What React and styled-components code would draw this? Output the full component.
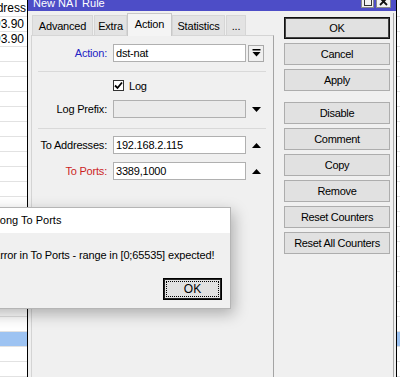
import React from "react";
import styled, { createGlobalStyle } from "styled-components";

const Global = createGlobalStyle`
  html, body { margin: 0; padding: 0; background: #fff; }
  body {
    font-family: "Liberation Sans", Arial, sans-serif;
    font-size: 11px;
    color: #000;
    overflow: hidden;
  }
  * { box-sizing: border-box; }
`;

const Screen = styled.div`
  position: relative;
  width: 400px;
  height: 377px;
  overflow: hidden;
  background: #fff;
`;

/* ---------- background list ---------- */
const List = styled.div`
  display: flex;
  flex-direction: column;
`;
const ListHeader = styled.div`
  height: 17px;
  border-bottom: 1px solid #e2e2e2;
  display: flex;
  align-items: center;
`;
const ListRow = styled.div`
  height: 15px;
  border-bottom: 1px solid #e2e2e2;
  display: flex;
  align-items: center;
  background: ${(p) => (p.$selected ? "#9dc3f2" : "#fff")};
`;
const Cell = styled.div`
  width: 27px;
  overflow: hidden;
  display: flex;
  justify-content: flex-end;
  white-space: nowrap;
  padding-right: ${(p) => p.$pad}px;
  font-size: 12px;
  & > span { flex-shrink: 0; }
`;

/* ---------- window ---------- */
const Window = styled.div`
  position: absolute;
  left: 27px;
  top: -13px;
  width: 370px;
  height: 430px;
  background: #f0f0f0;
  border-left: 1px solid #000;
  border-right: 1px solid #000;
  display: flex;
  flex-direction: column;
  letter-spacing: -0.2px;
`;
const TitleBar = styled.div`
  height: 24px;
  flex-shrink: 0;
  background: #4d4dc7;
  display: flex;
  align-items: flex-start;
  padding: 0 5px;
  color: #fff;
`;
const TitleText = styled.div`
  flex: 1;
  padding-top: 10px;
  line-height: 13px;
  font-size: 11px;
  letter-spacing: 0;
`;
const TitleBtn = styled.div`
  width: ${(p) => p.$w}px;
  height: 16px;
  margin-top: 5px;
  margin-left: ${(p) => p.$ml}px;
  background: #f2f2f2;
  border: 1px solid #8a8a8a;
  display: flex;
  align-items: flex-end;
  justify-content: center;
  padding-bottom: 1px;
`;

const Body = styled.div`
  flex: 1;
  display: flex;
  padding: 2px 2px 0 3px;
`;
const LeftCol = styled.div`
  width: 243px;
  display: flex;
  flex-direction: column;
`;
const Tabs = styled.div`
  height: 23px;
  display: flex;
  align-items: flex-end;
  position: relative;
  z-index: 1;
  margin-bottom: -1px;
`;
const Tab = styled.div`
  width: ${(p) => p.$w}px;
  margin-left: ${(p) => p.$ml}px;
  height: ${(p) => (p.$active ? 23 : 21)}px;
  background: ${(p) => (p.$active ? "#f4f4f4" : "#e3e3e3")};
  border: 1px solid ${(p) => (p.$active ? "#c8c8c8" : "#d6d6d6")};
  border-bottom: ${(p) => (p.$active ? "none" : "1px solid #d6d6d6")};
  display: flex;
  align-items: center;
  justify-content: center;
  padding-bottom: ${(p) => (p.$active ? 2 : 0)}px;
`;
const Panel = styled.div`
  flex: 1;
  border: 1px solid #d4d4d4;
  border-right-color: #a4a4a4;
  border-bottom: none;
  background: #f0f0f0;
  padding-top: 8px;
  display: flex;
  flex-direction: column;
`;
const Row = styled.div`
  display: flex;
  align-items: center;
  height: 18px;
  margin-top: ${(p) => p.$mt || 0}px;
`;
const Label = styled.div`
  width: 75px;
  margin-right: 6px;
  text-align: right;
  white-space: nowrap;
  color: ${(p) => p.$color || "#000"};
`;
const Input = styled.div`
  width: 133px;
  height: 18px;
  border: 1px solid #b0b0b0;
  background: ${(p) => (p.$disabled ? "#ebebeb" : "#fff")};
  padding-left: 2px;
  line-height: 16px;
  white-space: nowrap;
  overflow: hidden;
`;
const Extra = styled.div`
  width: 16px;
  height: 17px;
  margin-left: 2px;
  display: flex;
  align-items: center;
  justify-content: center;
  ${(p) =>
    p.$button &&
    `
    border: 1px solid #a9a9a9;
    background: #f0f0f0;
  `}
`;
const Separator = styled.div`
  height: 1px;
  background: #d9d9d9;
  margin: ${(p) => p.$mt}px 7px 0 6px;
`;
const CheckRow = styled.div`
  display: flex;
  align-items: center;
  height: 11px;
  margin-top: 8px;
  padding-left: 81px;
`;
const CheckBox = styled.div`
  width: 11px;
  height: 11px;
  border: 1px solid #333;
  background: #fff;
  display: flex;
  align-items: center;
  justify-content: center;
`;
const CheckLabel = styled.span`
  margin-left: 5px;
`;

const RightArea = styled.div`
  flex: 1;
  padding: 4px 3px 0 10px;
  border-right: 1px solid #a9a9a9;
  display: flex;
  flex-direction: column;
`;
const Button = styled.div`
  width: 106px;
  height: 22px;
  margin-top: ${(p) => p.$mt}px;
  background: #e1e1e1;
  border: 1px solid ${(p) => (p.$default ? "#111" : "#adadad")};
  box-shadow: ${(p) => (p.$default ? "inset 0 0 0 1px #444" : "none")};
  display: flex;
  align-items: center;
  justify-content: center;
  white-space: nowrap;
  letter-spacing: -0.3px;
`;

/* ---------- error dialog ---------- */
const Dialog = styled.div`
  position: absolute;
  left: -23px;
  top: 207px;
  width: 254px;
  background: #f0f0f0;
  border: 1px solid #b5b5b5;
  box-shadow: 3px 5px 14px rgba(0, 0, 0, 0.28);
  display: flex;
  flex-direction: column;
`;
const DialogTitle = styled.div`
  height: 25px;
  line-height: 25px;
  background: #fff;
  padding-left: 8px;
  font-size: 11px;
  white-space: nowrap;
`;
const DialogBody = styled.div`
  padding: 16px 8px 8px 15px;
  display: flex;
  flex-direction: column;
`;
const DialogText = styled.div`
  line-height: 13px;
  white-space: nowrap;
  letter-spacing: -0.15px;
`;
const DialogActions = styled.div`
  display: flex;
  justify-content: flex-end;
  margin-top: 16px;
`;
const DialogButton = styled.div`
  width: 59px;
  height: 22px;
  border: 1px solid #000;
  box-shadow: inset 0 0 0 1px #222;
  background: #e1e1e1;
  outline: 1px dotted #000;
  outline-offset: -4px;
  display: flex;
  align-items: center;
  justify-content: center;
  font-size: 12px;
`;

/* ---------- icons ---------- */
const DropIcon = () => (
  <svg width="9" height="8" viewBox="0 0 9 8">
    <rect x="0.5" y="0" width="8" height="1.5" fill="#000" />
    <polygon points="0.5,3 8.5,3 4.5,7.5" fill="#000" />
  </svg>
);
const TriDown = () => (
  <svg width="9" height="5" viewBox="0 0 9 5">
    <polygon points="0,0 9,0 4.5,5" fill="#000" />
  </svg>
);
const TriUp = () => (
  <svg width="9" height="5" viewBox="0 0 9 5">
    <polygon points="0,5 9,5 4.5,0" fill="#000" />
  </svg>
);
const Check = () => (
  <svg width="9" height="9" viewBox="0 0 9 9">
    <polyline points="1,4.5 3.5,7 8,1.5" fill="none" stroke="#000" strokeWidth="1.8" />
  </svg>
);
const MaxIcon = () => (
  <svg width="8" height="7" viewBox="0 0 8 7">
    <rect x="0.5" y="0.5" width="7" height="6" fill="none" stroke="#333" />
  </svg>
);
const CloseIcon = () => (
  <svg width="9" height="8" viewBox="0 0 9 8">
    <path d="M1 0 L8 7 M8 0 L1 7" stroke="#111" strokeWidth="1.8" />
  </svg>
);

const tabs = [
  { label: "Advanced", w: 61, ml: 1 },
  { label: "Extra", w: 33, ml: 1 },
  { label: "Action", w: 45, ml: 0, active: true },
  { label: "Statistics", w: 53, ml: 0 },
  { label: "...", w: 20, ml: 1 },
];

const buttons = [
  { label: "OK", mt: 0, def: true },
  { label: "Cancel", mt: 4 },
  { label: "Apply", mt: 4 },
  { label: "Disable", mt: 11 },
  { label: "Comment", mt: 4 },
  { label: "Copy", mt: 4 },
  { label: "Remove", mt: 4 },
  { label: "Reset Counters", mt: 4 },
  { label: "Reset All Counters", mt: 4 },
];

const rows = Array.from({ length: 24 }, (_, i) => ({
  text: i < 2 ? "10.10.93.90" : "",
  selected: i === 21,
}));

export default function App() {
  return (
    <>
      <Global />
      <Screen>
        <List>
          <ListHeader>
            <Cell $pad={1}>
              <span>Dst. Address</span>
            </Cell>
          </ListHeader>
          {rows.map((r, i) => (
            <ListRow key={i} $selected={r.selected}>
              <Cell $pad={3}>
                <span>{r.text}</span>
              </Cell>
            </ListRow>
          ))}
        </List>

        <Window>
          <TitleBar>
            <TitleText>New NAT Rule</TitleText>
            <TitleBtn $w={13} $ml={0}>
              <MaxIcon />
            </TitleBtn>
            <TitleBtn $w={15} $ml={2}>
              <CloseIcon />
            </TitleBtn>
          </TitleBar>
          <Body>
            <LeftCol>
              <Tabs>
                {tabs.map((t) => (
                  <Tab key={t.label} $w={t.w} $ml={t.ml} $active={t.active}>
                    {t.label}
                  </Tab>
                ))}
              </Tabs>
              <Panel>
                <Row>
                  <Label $color="#2323c4">Action:</Label>
                  <Input>dst-nat</Input>
                  <Extra $button>
                    <DropIcon />
                  </Extra>
                </Row>
                <Separator $mt={9} />
                <CheckRow>
                  <CheckBox>
                    <Check />
                  </CheckBox>
                  <CheckLabel>Log</CheckLabel>
                </CheckRow>
                <Row $mt={9}>
                  <Label>Log Prefix:</Label>
                  <Input $disabled />
                  <Extra>
                    <TriDown />
                  </Extra>
                </Row>
                <Separator $mt={10} />
                <Row $mt={7}>
                  <Label>To Addresses:</Label>
                  <Input>192.168.2.115</Input>
                  <Extra>
                    <TriUp />
                  </Extra>
                </Row>
                <Row $mt={8}>
                  <Label $color="#cc1f1f">To Ports:</Label>
                  <Input>3389,1000</Input>
                  <Extra>
                    <TriUp />
                  </Extra>
                </Row>
              </Panel>
            </LeftCol>
            <RightArea>
              {buttons.map((b) => (
                <Button key={b.label} $mt={b.mt} $default={b.def}>
                  {b.label}
                </Button>
              ))}
            </RightArea>
          </Body>
        </Window>

        <Dialog>
          <DialogTitle>Wrong To Ports</DialogTitle>
          <DialogBody>
            <DialogText>Error in To Ports - range in [0;65535] expected!</DialogText>
            <DialogActions>
              <DialogButton>OK</DialogButton>
            </DialogActions>
          </DialogBody>
        </Dialog>
      </Screen>
    </>
  );
}
